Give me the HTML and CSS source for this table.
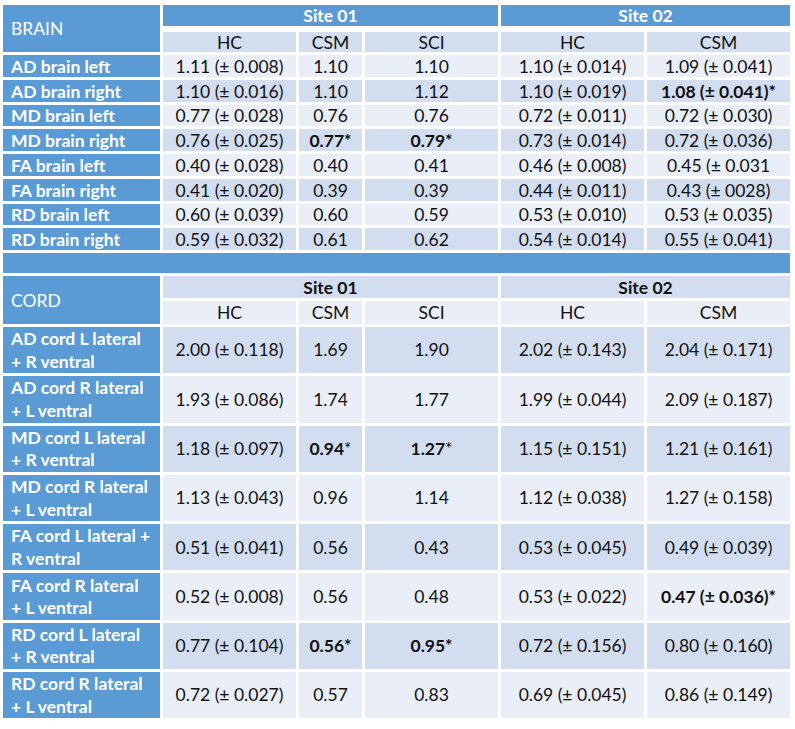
FILE: index.html
```html
<!DOCTYPE html>
<html>
<head>
<meta charset="utf-8">
<link rel="stylesheet" href="styles.css">
</head>
<body>
<table class="dt">
  <colgroup>
    <col class="c-label"><col class="c-hc"><col class="c-csm"><col class="c-sci"><col class="c-hc2"><col class="c-csm2">
  </colgroup>
  <tbody>
    <tr class="r-site">
      <td class="lab sec" rowspan="2">BRAIN</td>
      <td class="site" colspan="3">Site 01</td>
      <td class="site" colspan="2">Site 02</td>
    </tr>
    <tr class="r-grp dark">
      <td>HC</td><td>CSM</td><td>SCI</td><td>HC</td><td>CSM</td>
    </tr>
    <tr class="rb light"><td class="lab">AD brain left</td><td>1.11 (± 0.008)</td><td>1.10</td><td>1.10</td><td>1.10 (± 0.014)</td><td>1.09 (± 0.041)</td></tr>
    <tr class="rb dark"><td class="lab">AD brain right</td><td>1.10 (± 0.016)</td><td>1.10</td><td>1.12</td><td>1.10 (± 0.019)</td><td class="b">1.08 (± 0.041)*</td></tr>
    <tr class="rb light"><td class="lab">MD brain left</td><td>0.77 (± 0.028)</td><td>0.76</td><td>0.76</td><td>0.72 (± 0.011)</td><td>0.72 (± 0.030)</td></tr>
    <tr class="rb dark"><td class="lab">MD brain right</td><td>0.76 (± 0.025)</td><td class="b">0.77*</td><td class="b">0.79*</td><td>0.73 (± 0.014)</td><td>0.72 (± 0.036)</td></tr>
    <tr class="rb light"><td class="lab">FA brain left</td><td>0.40 (± 0.028)</td><td>0.40</td><td>0.41</td><td>0.46 (± 0.008)</td><td>0.45 (± 0.031</td></tr>
    <tr class="rb dark"><td class="lab">FA brain right</td><td>0.41 (± 0.020)</td><td>0.39</td><td>0.39</td><td>0.44 (± 0.011)</td><td>0.43 (± 0028)</td></tr>
    <tr class="rb light"><td class="lab">RD brain left</td><td>0.60 (± 0.039)</td><td>0.60</td><td>0.59</td><td>0.53 (± 0.010)</td><td>0.53 (± 0.035)</td></tr>
    <tr class="rb dark"><td class="lab">RD brain right</td><td>0.59 (± 0.032)</td><td>0.61</td><td>0.62</td><td>0.54 (± 0.014)</td><td>0.55 (± 0.041)</td></tr>
    <tr class="r-sep"><td colspan="6"></td></tr>
    <tr class="r-csite dark">
      <td class="lab sec" rowspan="2">CORD</td>
      <td class="b" colspan="3">Site 01</td>
      <td class="b" colspan="2">Site 02</td>
    </tr>
    <tr class="r-cgrp light">
      <td>HC</td><td>CSM</td><td>SCI</td><td>HC</td><td>CSM</td>
    </tr>
    <tr class="rc dark"><td class="lab">AD cord L lateral<br>+ R ventral</td><td>2.00 (± 0.118)</td><td>1.69</td><td>1.90</td><td>2.02 (± 0.143)</td><td>2.04 (± 0.171)</td></tr>
    <tr class="rc light"><td class="lab">AD cord R lateral<br>+ L ventral</td><td>1.93 (± 0.086)</td><td>1.74</td><td>1.77</td><td>1.99 (± 0.044)</td><td>2.09 (± 0.187)</td></tr>
    <tr class="rc dark"><td class="lab">MD cord L lateral<br>+ R ventral</td><td>1.18 (± 0.097)</td><td><b>0.94</b>*</td><td><b>1.27</b>*</td><td>1.15 (± 0.151)</td><td>1.21 (± 0.161)</td></tr>
    <tr class="rc light"><td class="lab">MD cord R lateral<br>+ L ventral</td><td>1.13 (± 0.043)</td><td>0.96</td><td>1.14</td><td>1.12 (± 0.038)</td><td>1.27 (± 0.158)</td></tr>
    <tr class="rc dark"><td class="lab">FA cord L lateral +<br>R ventral</td><td>0.51 (± 0.041)</td><td>0.56</td><td>0.43</td><td>0.53 (± 0.045)</td><td>0.49 (± 0.039)</td></tr>
    <tr class="rc light"><td class="lab">FA cord R lateral<br>+ L ventral</td><td>0.52 (± 0.008)</td><td>0.56</td><td>0.48</td><td>0.53 (± 0.022)</td><td class="b">0.47 (± 0.036)*</td></tr>
    <tr class="rc dark"><td class="lab">RD cord L lateral<br>+ R ventral</td><td>0.77 (± 0.104)</td><td class="b">0.56*</td><td class="b">0.95*</td><td>0.72 (± 0.156)</td><td>0.80 (± 0.160)</td></tr>
    <tr class="rc light"><td class="lab">RD cord R lateral<br>+ L ventral</td><td>0.72 (± 0.027)</td><td>0.57</td><td>0.83</td><td>0.69 (± 0.045)</td><td>0.86 (± 0.149)</td></tr>
  </tbody>
</table>
</body>
</html>
```

FILE: styles.css
```css
html, body {
  margin: 0;
  padding: 0;
  background: #ffffff;
}

.dt {
  margin-top: 2px;
  width: 793px;
  table-layout: fixed;
  border-collapse: separate;
  border-spacing: 3px;
  font-family: Lato, "Open Sans", sans-serif;
  font-size: 17.5px;
  color: #111111;
}

.c-label { width: 157px; }
.c-hc { width: 133px; }
.c-csm { width: 63px; }
.c-sci { width: 133px; }
.c-hc2 { width: 143px; }
.c-csm2 { width: 143px; }

.dt td {
  padding: 0 1px;
  text-align: center;
  vertical-align: middle;
  line-height: 18px;
  white-space: nowrap;
  overflow: hidden;
}

.dark td { background: #d2ddef; }
.light td { background: #e9eef7; }

.dt td.lab {
  background: #5b9bd5;
  color: #ffffff;
  font-weight: bold;
  text-align: left;
  padding-left: 8px;
}

.dt td.sec {
  font-weight: normal;
}

.dt td.site {
  background: #5b9bd5;
  color: #ffffff;
  font-weight: bold;
}

.r-site td { height: 20px; padding-top: 1px; }

.r-grp td {
  border-top: 3px solid #ffffff;
  height: 18px;
  padding-top: 2px;
}

.rb td { height: 19.75px; padding-top: 2px; }

.r-sep td {
  background: #5b9bd5;
  height: 20px;
}

.r-csite td { height: 20px; padding-top: 2px; }
.r-cgrp td { height: 22px; padding-top: 1px; }

.rc td {
  height: 45.3px;
  line-height: 22.5px;
  padding-top: 1px;
}

.dt td.b, .dt td b {
  font-weight: bold;
}
```
